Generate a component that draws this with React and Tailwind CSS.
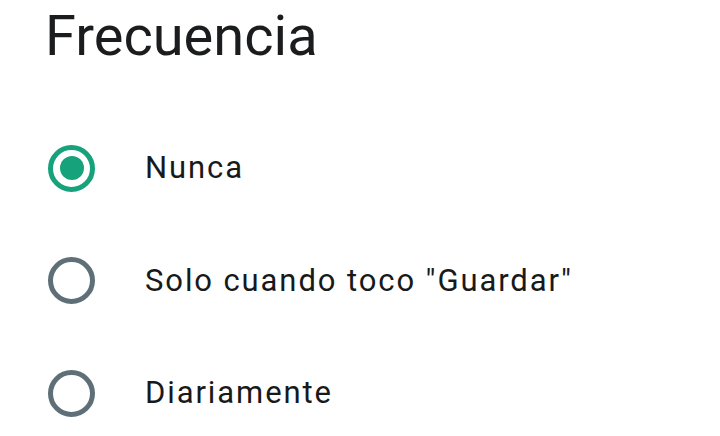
import React from 'react';

const options = [
  { id: 'never', label: 'Nunca' },
  { id: 'save', label: 'Solo cuando toco "Guardar"' },
  { id: 'daily', label: 'Diariamente' },
];

function Radio({ checked }) {
  return (
    <span
      className={`flex h-[47px] w-[47px] shrink-0 items-center justify-center rounded-full border-[5px] ${
        checked ? 'border-[#16a37b]' : 'border-[#5f6f77]'
      }`}
    >
      {checked && <span className="h-[24px] w-[24px] rounded-full bg-[#16a37b]" />}
    </span>
  );
}

export default function App() {
  const selected = 'never';
  return (
    <div className="h-[436px] w-[720px] overflow-hidden bg-white" style={{ fontFamily: 'Roboto, "Noto Sans", sans-serif' }}>
      <h1 className="ml-[45px] mt-[8px] text-[56px] leading-[56px] font-normal text-[#1a1c1e]">Frecuencia</h1>
      <div className="mt-[48px] flex flex-col">
        {options.map(o => (
          <label key={o.id} className="flex h-[112.5px] items-center gap-[50px] pl-[48px]">
            <Radio checked={selected === o.id} />
            <span className="text-[31px] tracking-[1.9px] text-[#17191a]">{o.label}</span>
          </label>
        ))}
      </div>
    </div>
  );
}
